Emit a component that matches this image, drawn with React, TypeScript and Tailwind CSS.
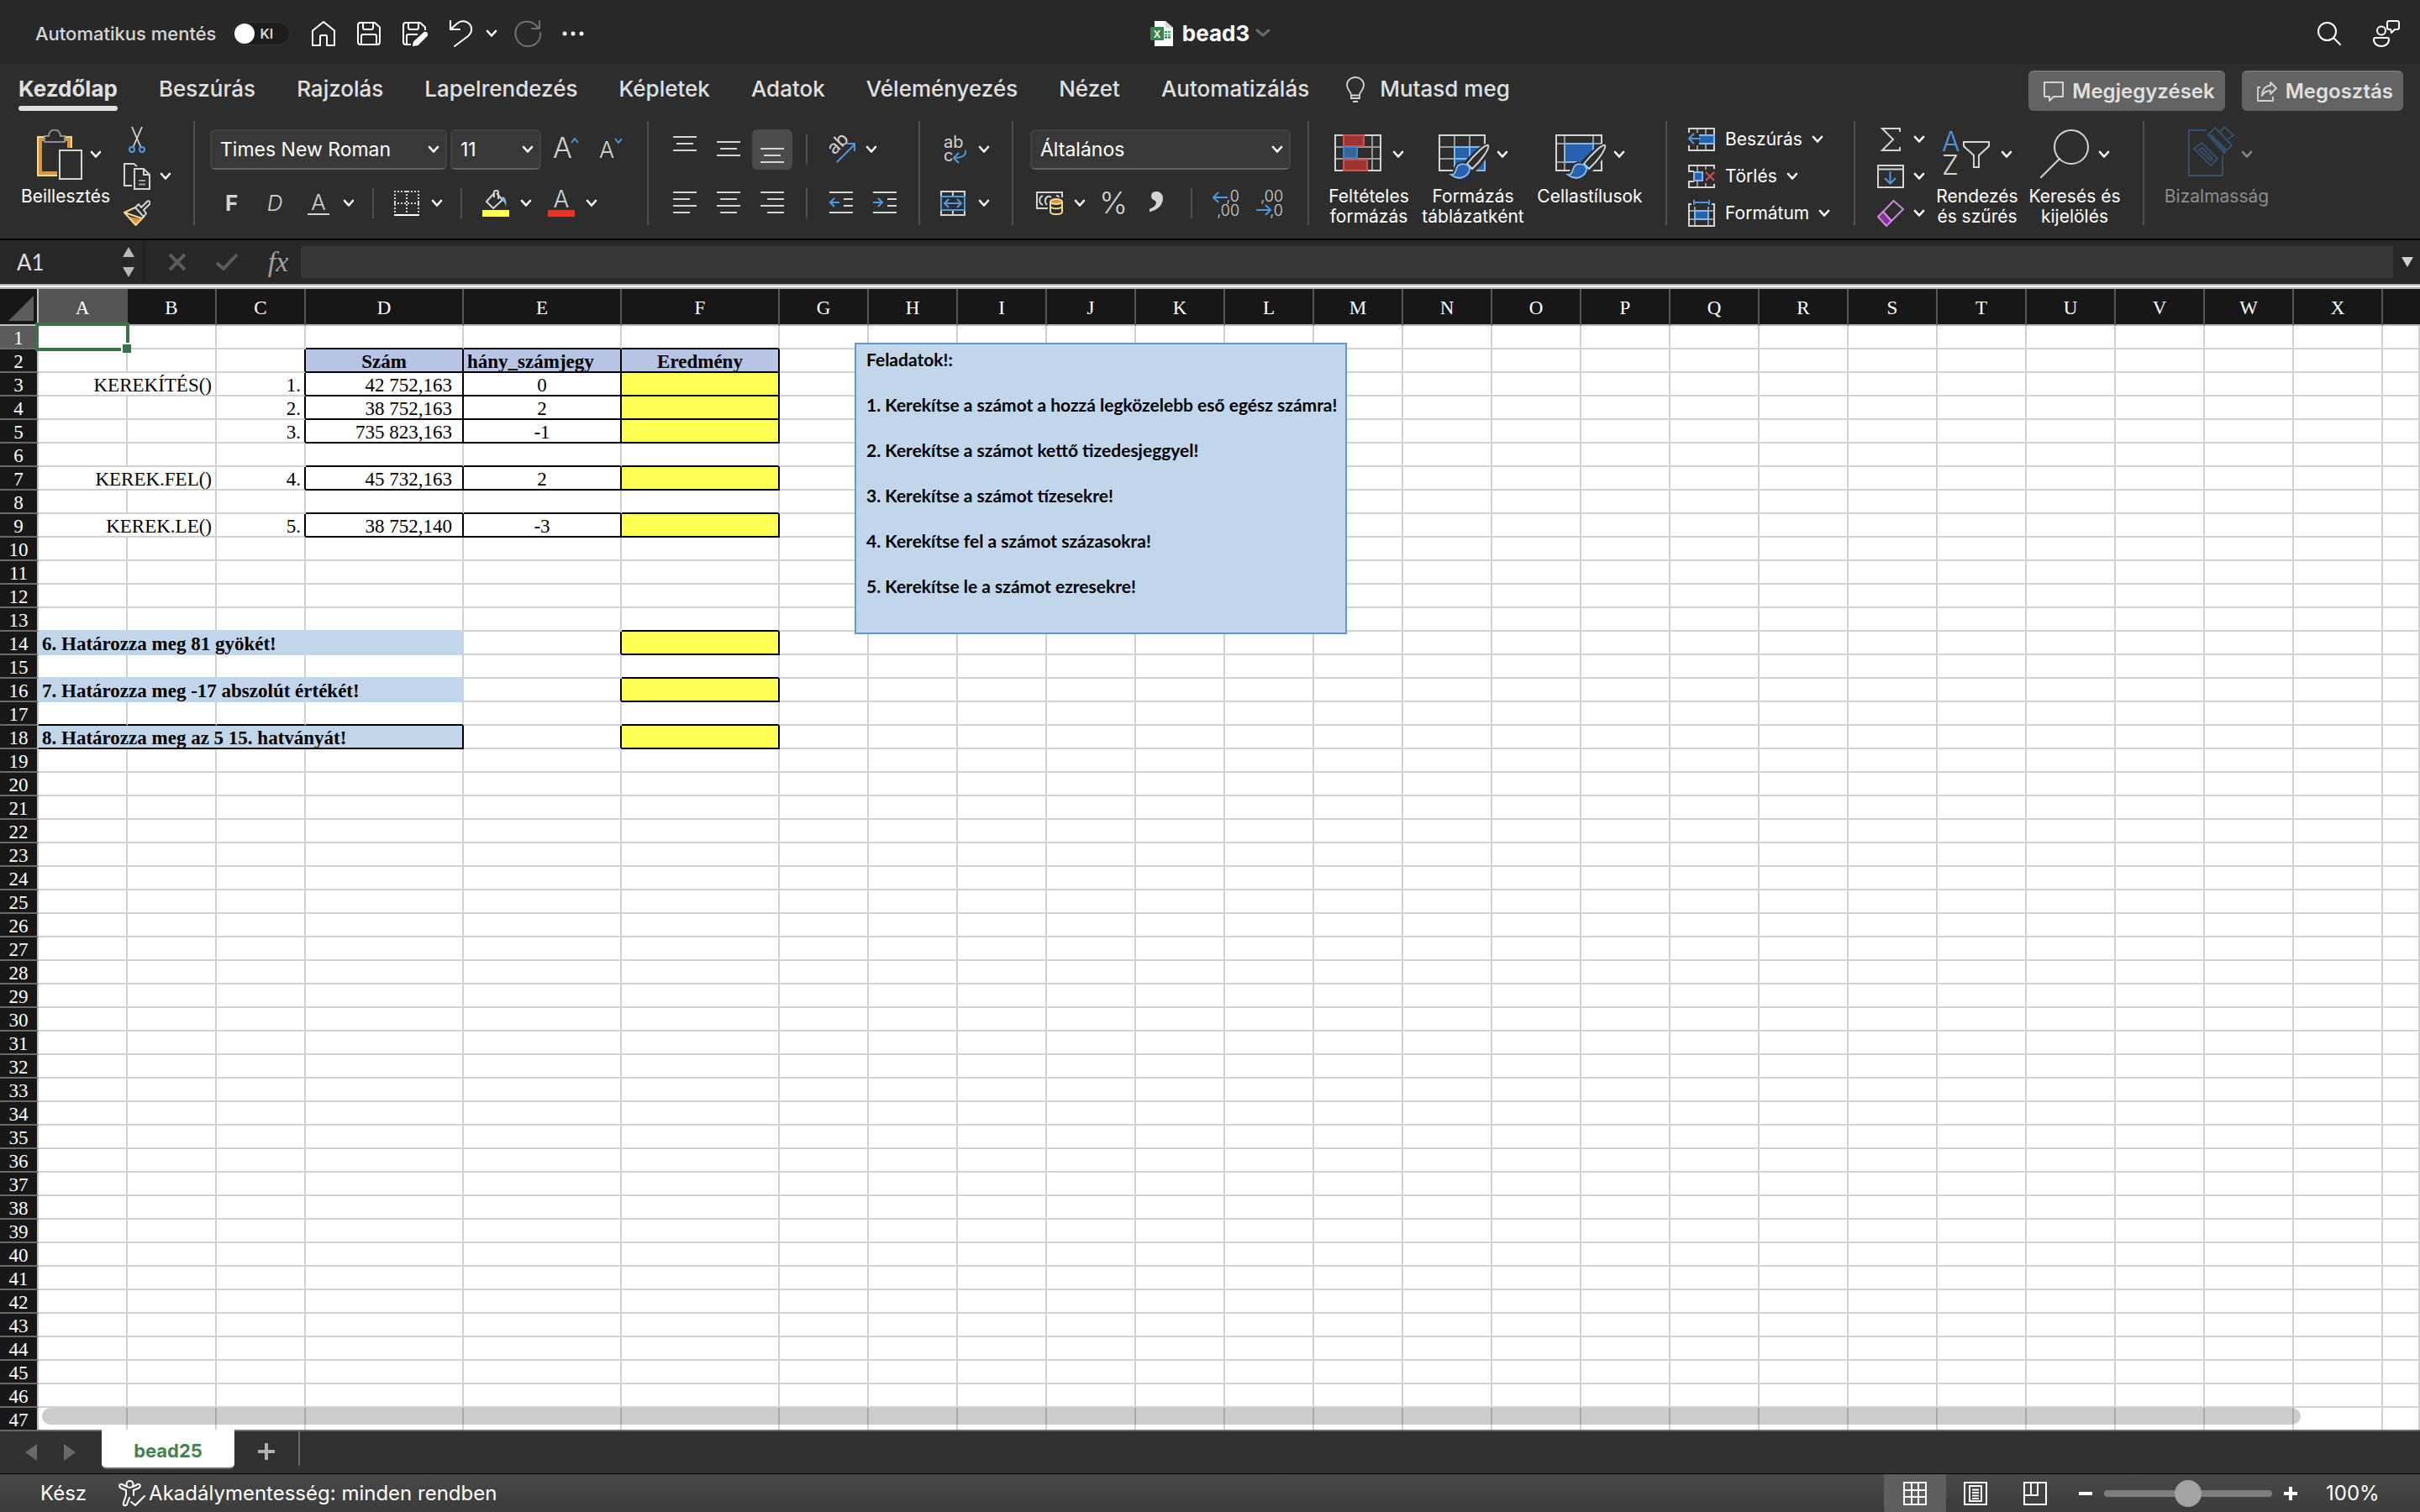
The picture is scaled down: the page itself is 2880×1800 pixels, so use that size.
import React, { useState } from 'react';
import clsx from 'clsx';

type IconProps = { className?: string };

const LIGHT = '#d4d4d4';
const BLUE = '#4f98df';
const SKY = '#84b9ee';
const NAVY = '#2862ae';

/* ---------- Icons ---------- */

const Chevron = ({ className = '' }: IconProps) => (
  <svg viewBox="0 0 12 8" className={clsx('h-2 w-3 shrink-0 overflow-visible', className)} fill="none" stroke="currentColor" strokeWidth="2.6" strokeLinecap="round" strokeLinejoin="round">
    <path d="M1 1L6 6.5L11 1" />
  </svg>
);

const HomeIcon = () => (
  <svg viewBox="0 0 28 30" className="h-[30px] w-7" fill="none" stroke="white" strokeWidth="2" strokeLinejoin="round">
    <path d="M1 11.5L14 1L27 11.5V29H18V18.5C18 17.5 17.500 17 16.500 17H11.500C10.500 17 10 17.500 10 18.500V29H1Z" />
  </svg>
);

const SaveIcon = () => (
  <svg viewBox="0 0 28 28" className="size-7" fill="none" stroke="white" strokeWidth="2" strokeLinejoin="round">
    <path d="M4 1H21L27 6.500V24C27 26 26 27 24 27H4C2 27 1 26 1 24V4C1 2 2 1 4 1Z" />
    <path d="M7 1V7C7 8.500 8 9 9 9H17C18.500 9 19 8 19 7V1M5 27V17C5 15.500 6 15 7 15H21C22.500 15 23 16 23 17V27" />
  </svg>
);

const SaveEditIcon = () => (
  <svg viewBox="0 0 30 30" className="size-[30px]" fill="none" stroke="white" strokeWidth="2" strokeLinejoin="round">
    <path d="M10 28H4C2 28 1 27 1 25V5C1 3 2 2 4 2H21L27 7.500V11M7 2V8C7 9.500 8 10 9 10H17C18.500 10 19 9 19 8V2M5 28V18C5 16.500 6 16 7 16H18" />
    <path d="M26 14C28 13 30 15 29 17L18 28L13 29L14 25Z" fill="white" />
  </svg>
);

const UndoIcon = () => (
  <svg viewBox="0 0 28 32" className="h-8 w-7" fill="none" stroke="white" strokeWidth="2" strokeLinecap="round" strokeLinejoin="round">
    <path d="M1 1V11H12M1 11L9 4C16 -2 27 3 26 12C26 15 24 17 22 19L6 31" />
  </svg>
);

const RedoIcon = () => (
  <svg viewBox="0 0 34 34" className="size-[34px]" fill="none" stroke="#707070" strokeWidth="2" strokeLinecap="round" strokeLinejoin="round">
    <path d="M31 2V11H22M30 11C24 1 11 0 5 8C-1 17 4 30 15 32C26 33 33 25 32 16" />
  </svg>
);

const DotsIcon = () => (
  <svg viewBox="0 0 26 6" className="h-1.5 w-[26px]" fill="white">
    <circle cx="3" cy="3" r="2.500" />
    <circle cx="13" cy="3" r="2.500" />
    <circle cx="23" cy="3" r="2.500" />
  </svg>
);

const ExcelIcon = () => (
  <svg viewBox="0 0 28 30" className="h-[30px] w-7">
    <path d="M5 0H18L27 8V30H5Z" fill="white" />
    <path d="M18 0V8H27Z" fill="#d8d8d8" />
    <path d="M17 12H20V14H17ZM21 12H24V14H21ZM17 15.500H20V17.500H17ZM21 15.500H24V17.500H21Z" fill="#3d9b62" />
    <path d="M17 18.500H20V20.500H17ZM21 18.500H24V20.500H21Z" fill="#1e5a37" />
    <rect x="0" y="7" width="16" height="16" rx="1" fill="#3a8150" />
    <text x="8" y="19.500" textAnchor="middle" fontFamily="Inter, sans-serif" fontWeight="600" fontSize="12" fill="white">X</text>
  </svg>
);

const SearchIcon = () => (
  <svg viewBox="0 0 28 28" className="size-7" fill="none" stroke="white" strokeWidth="2" strokeLinecap="round">
    <circle cx="11.500" cy="11.500" r="10.500" />
    <path d="M19 19L27 27" />
  </svg>
);

const PresenceIcon = () => (
  <svg viewBox="0 0 32 32" className="size-8" fill="none" stroke="white" strokeWidth="2" strokeLinejoin="round">
    <circle cx="10" cy="12.500" r="5" />
    <path d="M3 21H17C18.500 21 19 22 19 23C19 28 15 31 10 31C5 31 1 28 1 23C1 22 1.500 21 3 21Z" />
    <path d="M19 1H29C30.500 1 31 2 31 3V9C31 10.500 30 11 29 11H26L22 15L21 11H19C17.500 11 17 10 17 9V3C17 2 17.500 1 19 1Z" />
  </svg>
);

const BulbIcon = () => (
  <svg viewBox="0 0 22 31" className="h-[31px] w-[22px]" fill="none" stroke={LIGHT} strokeWidth="1.800">
    <path d="M6 22C6 18 1 16 1 10.500C1 5 5.500 1 11 1C16.500 1 21 5 21 10.500C21 16 16 18 16 22V26H6ZM6 22.500H16M8 30H14" />
  </svg>
);

const CommentIcon = () => (
  <svg viewBox="0 0 24 24" className="size-6" fill="none" stroke={LIGHT} strokeWidth="2" strokeLinejoin="round">
    <path d="M1 1H23V18H12L7 23V18H1Z" />
  </svg>
);

const ShareIcon = () => (
  <svg viewBox="0 0 24 24" className="size-6" fill="none" stroke={LIGHT} strokeWidth="1.800" strokeLinejoin="round">
    <path d="M4 7H1V23H19V18" />
    <path d="M16 1L23 8L16 15V11C11 11 8 13 6 17C6 10 10 5 16 5Z" />
  </svg>
);

const PasteIcon = () => (
  <svg viewBox="0 0 54 60" className="h-[60px] w-[54px]" fill="none" strokeWidth="2">
    <path d="M41 22V9H1V55H24" stroke="#f6d98e" />
    <path d="M38 22V12H4V52H24" stroke="#d8963c" strokeWidth="4" />
    <path d="M9 15V8H14C14 -2 28 -2 28 8H33V15Z" stroke="#8f8f8f" fill="#2d2d2d" />
    <path d="M27 25H53V59H27Z" stroke={LIGHT} fill="#2d2d2d" />
  </svg>
);

const CutIcon = () => (
  <svg viewBox="0 0 32 32" className="size-8" fill="none" strokeWidth="1.800">
    <path d="M10 1L20.500 25M22 1L11.500 25" stroke={LIGHT} />
    <g stroke={BLUE} strokeWidth="2">
      <circle cx="10" cy="28" r="3" />
      <circle cx="22" cy="28" r="3" />
    </g>
  </svg>
);

const CopyIcon = () => (
  <svg viewBox="0 0 32 32" className="size-8" fill="none" stroke={LIGHT} strokeWidth="2">
    <path d="M10 27H1V1H12L16 4M13 7H24L31 14V31H13ZM24 7V14H31" />
    <path d="M18 21H26M18 25.500H26" stroke="#a0a0a0" />
  </svg>
);

const PainterIcon = () => (
  <svg viewBox="0 0 32 32" className="size-8" fill="none" strokeWidth="2" strokeLinejoin="round">
    <path d="M7 20L22 23L14 30Z" fill="#d8963c" />
    <path d="M14 9L1 15L14.500 30L25 19M1 15L22 22" stroke="#f6d98e" />
    <path d="M14 9L18 5L21 9L28 2C30 0 33 3 31 5L24 12L27 16L24 20Z" stroke={LIGHT} />
  </svg>
);

const GrowFontIcon = () => (
  <svg viewBox="0 0 32 32" className="size-8 overflow-visible" fill="none">
    <text x="0" y="26" fontFamily="Inter, sans-serif" fontWeight="300" fontSize="34" fill={LIGHT}>A</text>
    <path d="M22 8L26 3L30 8" stroke={BLUE} strokeWidth="2" />
  </svg>
);

const ShrinkFontIcon = () => (
  <svg viewBox="0 0 32 32" className="size-8 overflow-visible" fill="none">
    <text x="1" y="26" fontFamily="Inter, sans-serif" fontWeight="300" fontSize="27" fill={LIGHT}>A</text>
    <path d="M20 3L24 8L28 3" stroke={BLUE} strokeWidth="2" />
  </svg>
);

const BordersIcon = () => (
  <svg viewBox="0 0 30 30" className="size-[30px]" fill="none" stroke={LIGHT} strokeWidth="2">
    <path d="M0 1H30M0 15H30M1 0V26M15 0V26M29 0V26" strokeDasharray="2 2" />
    <path d="M0 29H30" stroke="white" />
  </svg>
);

const FillColorIcon = () => (
  <svg viewBox="0 0 32 32" className="size-8" fill="none">
    <path d="M14 4L5 14L13 22L24 12L17 4M14 9V3C14 0 19 0 19 3V11" stroke={LIGHT} strokeWidth="2" strokeLinejoin="round" />
    <path d="M24 8C28 9 29 14 28 20C27 16 26 14 23 12Z" fill={SKY} />
    <path d="M0 24H32V32H0Z" fill="#ffff54" />
  </svg>
);

const FontColorIcon = () => (
  <svg viewBox="0 0 32 32" className="size-8 overflow-visible" fill="none">
    <text x="16" y="21" textAnchor="middle" fontFamily="Inter, sans-serif" fontWeight="300" fontSize="28" fill={LIGHT}>A</text>
    <path d="M0 24H32V32H0Z" fill="#ea3323" />
  </svg>
);

const linePaths = {
  top: 'M0 1H28M4 9H24M0 17H28',
  middle: 'M0 7H28M4 15H24M0 23H28',
  bottom: 'M0 15H28M4 23H24M0 31H28',
  left: 'M0 3H28M0 11H20M0 19H28M0 27H20',
  center: 'M0 3H28M4 11H24M0 19H28M4 27H24',
  right: 'M0 3H28M8 11H28M0 19H28M8 27H28',
};

const LinesIcon = ({ kind }: { kind: keyof typeof linePaths }) => (
  <svg viewBox="0 0 28 32" className="h-8 w-7" fill="none" stroke={LIGHT} strokeWidth="2">
    <path d={linePaths[kind]} />
  </svg>
);

const IndentIcon = ({ out = false }: { out?: boolean }) => (
  <svg viewBox="0 0 28 32" className="h-8 w-7" fill="none" stroke={LIGHT} strokeWidth="2">
    <path d="M0 3H28M17 11H28M17 19H28M0 27H28" />
    <path d={out ? 'M12 15H1M6 10L1 15L6 20' : 'M0 15H11M6 10L11 15L6 20'} stroke={BLUE} />
  </svg>
);

const OrientationIcon = () => (
  <svg viewBox="0 0 34 34" className="size-[34px] overflow-visible" fill="none">
    <text x="8" y="24" transform="rotate(-45 8 24)" fontFamily="Inter, sans-serif" fontSize="22" fill={LIGHT}>ab</text>
    <path d="M11 32L32 11M23 10H32V19" stroke={BLUE} strokeWidth="2" />
  </svg>
);

const WrapIcon = () => (
  <svg viewBox="0 0 28 34" className="h-[34px] w-7 overflow-visible" fill="none">
    <text x="0" y="15" fontFamily="Inter, sans-serif" fontSize="20" fill={LIGHT}>ab</text>
    <text x="0" y="31" fontFamily="Inter, sans-serif" fontSize="20" fill={LIGHT}>c</text>
    <path d="M26 18C27 24 22 27 13 27M18 21L12 27L18 33" stroke={BLUE} strokeWidth="2" />
  </svg>
);

const MergeIcon = () => (
  <svg viewBox="0 0 30 30" className="size-[30px]" fill="none" strokeWidth="2">
    <path d="M1 6V1H29V6M1 24V29H29V24M15 1V6M15 24V29" stroke={LIGHT} />
    <path d="M1 7H29V23H1ZM5 15H25M10 10L5 15L10 20M20 10L25 15L20 20" stroke={BLUE} />
  </svg>
);

const CurrencyIcon = () => (
  <svg viewBox="0 0 32 28" className="h-7 w-8" fill="none" strokeWidth="2">
    <path d="M14 20H1V1H31V7" stroke={LIGHT} />
    <path d="M8 5C3 7 3 14 8 16M13 16C10 13 10 8 14 6C16 5 17 6 18 7M24 5C26 5 27 6 27 7" stroke={LIGHT} />
    <path d="M17 12V24C17 28 31 28 31 24V12" stroke="#f6d98e" />
    <ellipse cx="24" cy="12" rx="7" ry="3" stroke="#f6d98e" fill="#d8963c" />
    <path d="M17 18C19 21 29 21 31 18" stroke="#f6d98e" />
  </svg>
);

const PercentIcon = () => (
  <svg viewBox="0 0 32 32" className="size-8 overflow-visible">
    <text x="16" y="28" textAnchor="middle" fontFamily="Inter, sans-serif" fontWeight="300" fontSize="36" fill={LIGHT}>%</text>
  </svg>
);

const CommaIcon = () => (
  <svg viewBox="0 0 16 28" className="h-7 w-4 overflow-visible">
    <text x="8" y="12" textAnchor="middle" fontFamily="Liberation Serif, serif" fontWeight="700" fontSize="80" fill={LIGHT}>,</text>
  </svg>
);

const DecimalIcon = ({ less = false }: { less?: boolean }) => (
  <svg viewBox="0 0 32 32" className="size-8 overflow-visible" fill="none">
    <g fontFamily="Inter, sans-serif" fontWeight="300" fontSize="18" fill={LIGHT} textAnchor="end">
      <text x="32" y="14">{less ? ',00' : ',0'}</text>
      <text x="32" y="31">{less ? ',0' : ',00'}</text>
    </g>
    <path d={less ? 'M0 24H17M11 18L17 24L11 30' : 'M18 9H1M7 3L1 9L7 15'} stroke={BLUE} strokeWidth="2" />
  </svg>
);

const PaintTip = () => (
  <>
    <path d="M59 20C62 23 50 39 41 48L33 41C42 31 56 18 59 20Z" fill="#2d2d2d" stroke="#2d2d2d" strokeWidth="7" />
    <path d="M15 54C20 54 20 50 22 45C25 40 34 40 37 46C38 54 26 63 15 54Z" fill="#2d2d2d" stroke="#2d2d2d" strokeWidth="6" />
    <path d="M59 19C61 23 50 38 40 47L34 41C42 31 56 17 59 19Z" fill="#2d2d2d" stroke={LIGHT} strokeWidth="2" />
    <path d="M15 54C20 54 20 50 22 45C25 40 34 40 37 46C38 54 26 63 15 54Z" fill={NAVY} stroke={SKY} strokeWidth="2" />
  </>
);

const ConditionalIcon = () => (
  <svg viewBox="0 0 60 60" className="size-[60px]" fill="none" strokeWidth="2">
    <path d="M1 21H55M1 35H55M11 7V49M45 7V49" stroke="#9a9a9a" />
    <path d="M1 7H55V49H1Z" stroke={LIGHT} />
    <path d="M11 7H35V20H11ZM11 36H39V49H11Z" fill="#9c3530" stroke="#d2514c" />
    <path d="M11 21H27V34H11Z" fill="#35659c" stroke="#3f86c6" />
  </svg>
);

const FormatTableIcon = () => (
  <svg viewBox="0 0 60 60" className="size-[60px] overflow-visible" fill="none" strokeWidth="2">
    <path d="M1 21H55M1 35H55M19 7V49M37 7V49" stroke="#9a9a9a" />
    <path d="M1 7H55V49H1Z" stroke={LIGHT} />
    <path d="M19 21H55V49H19Z" fill={NAVY} stroke={SKY} />
    <path d="M19 35H55M37 21V49" stroke={SKY} />
    <PaintTip />
  </svg>
);

const CellStylesIcon = () => (
  <svg viewBox="0 0 60 60" className="size-[60px] overflow-visible" fill="none" strokeWidth="2">
    <path d="M1 17H55M1 39H55M11 7V49M45 7V49" stroke="#9a9a9a" />
    <path d="M1 7H55V49H1Z" stroke={LIGHT} />
    <path d="M11 17H45V39H11Z" fill={NAVY} stroke={SKY} />
    <PaintTip />
  </svg>
);

const InsertCellsIcon = () => (
  <svg viewBox="0 0 32 32" className="size-8" fill="none" strokeWidth="2">
    <path d="M11 3V29M21 3V29M1 11H31M1 21H31" stroke="#9a9a9a" />
    <path d="M1 9V3H31V29H1V21" stroke={LIGHT} />
    <path d="M12 11H31V21H12Z" fill={NAVY} stroke={SKY} />
    <path d="M0 8H13V23H0Z" fill="#2d2d2d" />
    <path d="M15 15H1M7 9L1 15L7 21" stroke={BLUE} />
  </svg>
);

const DeleteCellsIcon = () => (
  <svg viewBox="0 0 32 32" className="size-8" fill="none" strokeWidth="2">
    <path d="M11 3V10M21 3V8M11 22V29M21 24V29" stroke="#9a9a9a" />
    <path d="M7 10H1V3H31V7M7 22H1V29H31V25" stroke={LIGHT} />
    <path d="M7 11H17V21H7Z" fill={NAVY} stroke={SKY} />
    <path d="M21 11L31 21M31 11L21 21" stroke="#d2514c" />
  </svg>
);

const FormatCellsIcon = () => (
  <svg viewBox="0 0 32 32" className="size-8" fill="none" strokeWidth="2">
    <path d="M8 8V31M24 8V31M1 13H31M1 23H31" stroke="#9a9a9a" />
    <path d="M4 5H1V31H31V5H28" stroke={LIGHT} />
    <path d="M8 13H24V23H8Z" fill={NAVY} stroke={SKY} />
    <path d="M7 3H25M7 0V6M25 0V6" stroke={BLUE} />
  </svg>
);

const SumIcon = () => (
  <svg viewBox="0 0 32 32" className="size-8" fill="none" stroke={LIGHT} strokeWidth="2">
    <path d="M27 7V3H6L19 16L6 29H27V25" />
  </svg>
);

const FillDownIcon = () => (
  <svg viewBox="0 0 32 32" className="size-8" fill="none" stroke={LIGHT} strokeWidth="2">
    <path d="M1 3H31V29H1ZM1 7.500H31" />
    <path d="M15.500 10V24M9 18L15.500 24.500L22 18" stroke={BLUE} />
  </svg>
);

const EraserIcon = () => (
  <svg viewBox="0 0 32 32" className="size-8" fill="none" stroke="#c98bd6" strokeWidth="2" strokeLinejoin="round">
    <path d="M7 14L17 25L11 31L1 20Z" fill="#8a2f9e" />
    <path d="M19.500 1L31 11L17 25L7 14Z" />
  </svg>
);

const SortFilterIcon = () => (
  <svg viewBox="0 0 60 60" className="size-[60px] overflow-visible" fill="none">
    <text x="-1" y="26" fontFamily="Inter, sans-serif" fontWeight="300" fontSize="32" fill={BLUE}>A</text>
    <text x="-1" y="54" fontFamily="Inter, sans-serif" fontWeight="300" fontSize="32" fill={LIGHT}>Z</text>
    <path d="M25 15H55V20L43 31V45H37V31L25 20Z" stroke={LIGHT} strokeWidth="2" />
  </svg>
);

const FindIcon = () => (
  <svg viewBox="0 0 60 60" className="size-[60px]" fill="none" stroke={LIGHT} strokeWidth="2" strokeLinecap="round">
    <circle cx="37" cy="21" r="20" />
    <path d="M23 35L1 57" />
  </svg>
);

const SensitivityIcon = () => (
  <svg viewBox="0 0 54 60" className="h-[60px] w-[54px] overflow-visible" fill="none" stroke="#34506c" strokeWidth="2">
    <path d="M22 1H1V55H41V31M7 23L16 16L35 35L27 43ZM13 24L17 22L29 35L27 37Z" />
    <path d="M24 6L32 -2L52 19L44 27Z" />
    <path d="M24 7L28 7L46 25L43 28Z" fill="#34506c" />
    <path d="M38 3L43 -3L54 7L47 12" />
  </svg>
);

const AccessibilityIcon = () => (
  <svg viewBox="0 0 32 32" className="size-8" fill="none" stroke="white" strokeWidth="2" strokeLinecap="round" strokeLinejoin="round">
    <circle cx="13.500" cy="5" r="4" />
    <path d="M10 8L4 5C1 4 0 8 3 9.500L9 12V18L6 27C5 31 9 31 10 29L13 21M17 8L23 5C26 4 27 8 24 9.500L18 12V18M15 26L20 30L31 19" />
  </svg>
);

const NormalViewIcon = () => (
  <svg viewBox="0 0 28 28" className="size-7" fill="none" stroke="white" strokeWidth="2">
    <path d="M1 1H27V27H1ZM10 1V27M18 1V27M1 10H27M1 18H27" />
  </svg>
);

const PageLayoutIcon = () => (
  <svg viewBox="0 0 28 28" className="size-7" fill="none" stroke="white" strokeWidth="2">
    <path d="M1 1H27V27H1ZM7 5H21V23H7ZM10 9.500H18M10 13H18M10 16.500H18M10 20H18" />
  </svg>
);

const PageBreakIcon = () => (
  <svg viewBox="0 0 28 28" className="size-7" fill="none" stroke="white" strokeWidth="2">
    <path d="M1 1H27V27H1ZM9 1V16M17 1V16H1" />
  </svg>
);

/* ---------- Ribbon pieces ---------- */

const IconButton = ({ label, className = '', children }: { label: string; className?: string; children: React.ReactNode }) => (
  <button type="button" aria-label={label} className={clsx('flex shrink-0 items-center', className)}>
    {children}
  </button>
);

const Separator = () => <div className="h-[124px] w-0.5 shrink-0 bg-[#505050]" />;
const SmallSeparator = ({ className = '' }: IconProps) => <div className={clsx('h-9 w-0.5 shrink-0 bg-[#505050]', className)} />;

const SelectBox = ({ label, value, className = '' }: { label: string; value: string; className?: string }) => (
  <div className={clsx('relative flex h-12 shrink-0 items-center rounded-md border-2 border-[#424242] border-b-[#606060] bg-[#383838]', className)}>
    <select aria-label={label} defaultValue={value} className="h-full w-full appearance-none bg-transparent px-2.5 text-[23px] text-white outline-none">
      <option>{value}</option>
    </select>
    <Chevron className="pointer-events-none absolute right-2" />
  </div>
);

const BigButton = ({ lines, icon, className = '', iconClass = '' }: { lines: string[]; icon: React.ReactNode; className?: string; iconClass?: string }) => (
  <button type="button" className={clsx('flex shrink-0 flex-col items-center gap-2 pt-2.5 text-[21px] leading-6 whitespace-nowrap', className)}>
    <span className={clsx('flex items-center gap-2.5', iconClass)}>
      {icon}
      <Chevron />
    </span>
    <span>
      {lines.map((line) => (
        <span key={line} className="block">{line}</span>
      ))}
    </span>
  </button>
);

const TitleBar = () => {
  const [autoSave, setAutoSave] = useState(false);

  return (
    <header className="grid h-[76px] shrink-0 grid-cols-[1fr_auto_1fr] items-center bg-[#282828] pt-1">
      <div className="flex items-center pl-[42px]">
        <label className="flex items-center text-[22px] font-medium text-[#d6d6d6]">
          Automatikus mentés
          <input type="checkbox" role="switch" className="sr-only" checked={autoSave} onChange={(e) => setAutoSave(e.target.checked)} />
          <span className={clsx('ml-5 flex h-7 w-[68px] items-center gap-1.5 rounded-full border border-[#333333] px-px text-base font-semibold', autoSave ? 'flex-row-reverse bg-green-700' : 'bg-[#1c1c1c]')}>
            <span className="size-6 rounded-full bg-white" />
            {autoSave ? 'BE' : 'KI'}
          </span>
        </label>
        <div className="ml-[26px] flex items-center gap-[26px]">
          <IconButton label="Kezdőlap megnyitása"><HomeIcon /></IconButton>
          <IconButton label="Mentés"><SaveIcon /></IconButton>
          <IconButton label="Mentés másként"><SaveEditIcon /></IconButton>
          <IconButton label="Visszavonás" className="gap-4"><UndoIcon /><Chevron /></IconButton>
        </div>
        <IconButton label="Ismétlés" className="ml-5"><RedoIcon /></IconButton>
        <IconButton label="Továbbiak" className="ml-6"><DotsIcon /></IconButton>
      </div>
      <button type="button" className="flex items-center text-[26px] leading-8 font-bold">
        <ExcelIcon />
        <span className="ml-2.5">bead3</span>
        <svg viewBox="0 0 16 8" className="ml-2 h-2 w-4 overflow-visible" fill="none" stroke="#6b6b6b" strokeWidth="3" strokeLinecap="round" strokeLinejoin="round">
          <path d="M1 0L8 6L15 0" />
        </svg>
      </button>
      <div className="flex items-center justify-end gap-[38px] pr-6">
        <IconButton label="Keresés"><SearchIcon /></IconButton>
        <IconButton label="Jelenlét"><PresenceIcon /></IconButton>
      </div>
    </header>
  );
};

const tabs = ['Kezdőlap', 'Beszúrás', 'Rajzolás', 'Lapelrendezés', 'Képletek', 'Adatok', 'Véleményezés', 'Nézet', 'Automatizálás'];

const TabBar = () => (
  <nav className="flex h-16 shrink-0 items-start bg-[#2d2d2d] pr-5 pl-[22px] text-[26px] leading-8 text-[#e0e0e0]">
    <div className="flex gap-[49px] pt-3.5">
      {tabs.map((tab, i) => (
        <a key={tab} href="#" className={i === 0 ? 'font-bold' : 'font-medium'}>
          {tab}
          {i === 0 && <span className="mt-1 block h-1.5 rounded-full bg-[#e0e0e0]" />}
        </a>
      ))}
    </div>
    <a href="#" className="ml-11 flex items-center gap-[18px] pt-3.5 font-medium">
      <BulbIcon />
      Mutasd meg
    </a>
    <div className="mt-2 ml-auto flex gap-5 text-2xl font-semibold">
      <button type="button" className="flex h-12 items-center gap-2.5 rounded-md border-t-2 border-[#757575] bg-[#636363] pr-3 pl-[18px]">
        <CommentIcon />
        Megjegyzések
      </button>
      <button type="button" className="flex h-12 items-center gap-2.5 rounded-md border-t-2 border-[#757575] bg-[#636363] pr-3 pl-[18px]">
        <ShareIcon />
        Megosztás
      </button>
    </div>
  </nav>
);

const Ribbon = () => (
  <div className="flex h-[146px] shrink-0 overflow-hidden border-b-2 border-black bg-[#2d2d2d] pt-1 text-white">
    {/* Clipboard */}
    <div className="flex w-[230px] shrink-0 items-start pl-6">
      <BigButton className="w-[108px]" iconClass="pl-2" lines={['Beillesztés']} icon={<PasteIcon />} />
      <div className="ml-[15px] flex flex-col gap-3 pt-1.5">
        <IconButton label="Kivágás"><CutIcon /></IconButton>
        <IconButton label="Másolás" className="gap-3"><CopyIcon /><Chevron /></IconButton>
        <IconButton label="Formátummásoló"><PainterIcon /></IconButton>
      </div>
    </div>
    <Separator />

    {/* Font */}
    <div className="flex w-[538px] shrink-0 flex-col gap-4 pt-2.5 pl-[18px]">
      <div className="flex h-12 items-center">
        <SelectBox label="Betűtípus" value="Times New Roman" className="w-[282px]" />
        <SelectBox label="Betűméret" value="11" className="ml-1 w-[108px]" />
        <IconButton label="Betűméret növelése" className="ml-3.5"><GrowFontIcon /></IconButton>
        <IconButton label="Betűméret csökkentése" className="ml-[22px]"><ShrinkFontIcon /></IconButton>
      </div>
      <div className="flex h-12 items-center pl-[18px] text-[26px] leading-8 text-[#d4d4d4]">
        <button type="button" aria-label="Félkövér" className="w-3.5 font-bold">F</button>
        <button type="button" aria-label="Dőlt" className="ml-[34px] w-[22px] font-light italic">D</button>
        <IconButton label="Aláhúzott" className="ml-7 gap-[17px] text-white">
          <span className="flex w-[26px] flex-col items-center border-b-2 border-[#d4d4d4] leading-[26px] font-light text-[#d4d4d4]">A</span>
          <Chevron />
        </IconButton>
        <SmallSeparator className="ml-[22px]" />
        <IconButton label="Szegélyek" className="ml-6 gap-[15px] text-white"><BordersIcon /><Chevron /></IconButton>
        <SmallSeparator className="ml-[22px]" />
        <IconButton label="Kitöltőszín" className="ml-6 gap-3.5 text-white"><FillColorIcon /><Chevron /></IconButton>
        <IconButton label="Betűszín" className="ml-5 gap-3.5 text-white"><FontColorIcon /><Chevron /></IconButton>
      </div>
    </div>
    <Separator />

    {/* Alignment */}
    <div className="flex w-[321px] shrink-0 flex-col gap-4 pt-2.5 pl-[29px]">
      <div className="flex h-12 items-center">
        <IconButton label="Felülre igazítás"><LinesIcon kind="top" /></IconButton>
        <IconButton label="Középre igazítás függőlegesen" className="ml-6"><LinesIcon kind="middle" /></IconButton>
        <IconButton label="Alulra igazítás" className="ml-3.5 h-12 w-12 justify-center rounded-md bg-[#4b4b4b]"><LinesIcon kind="bottom" /></IconButton>
        <SmallSeparator className="ml-4" />
        <IconButton label="Tájolás" className="ml-6 gap-3"><OrientationIcon /><Chevron /></IconButton>
      </div>
      <div className="flex h-12 items-center gap-6">
        <IconButton label="Balra igazítás"><LinesIcon kind="left" /></IconButton>
        <IconButton label="Középre igazítás"><LinesIcon kind="center" /></IconButton>
        <IconButton label="Jobbra igazítás"><LinesIcon kind="right" /></IconButton>
        <SmallSeparator className="mx-0.5" />
        <IconButton label="Behúzás csökkentése"><IndentIcon out /></IconButton>
        <IconButton label="Behúzás növelése"><IndentIcon /></IconButton>
      </div>
    </div>
    <Separator />

    {/* Wrap and merge */}
    <div className="flex w-[109px] shrink-0 flex-col gap-4 pt-2.5 pl-6">
      <IconButton label="Sortörés" className="h-12 gap-3.5 pl-1"><WrapIcon /><Chevron /></IconButton>
      <IconButton label="Cellaegyesítés" className="h-12 gap-4"><MergeIcon /><Chevron /></IconButton>
    </div>
    <Separator />

    {/* Number */}
    <div className="flex w-[350px] shrink-0 flex-col gap-4 px-5 pt-2.5">
      <SelectBox label="Számformátum" value="Általános" className="w-full" />
      <div className="flex h-12 items-center pl-[7px]">
        <IconButton label="Könyvelési számformátum" className="gap-3.5"><CurrencyIcon /><Chevron /></IconButton>
        <IconButton label="Százalék" className="ml-[18px]"><PercentIcon /></IconButton>
        <IconButton label="Ezres csoport" className="ml-7"><CommaIcon /></IconButton>
        <SmallSeparator className="ml-8" />
        <IconButton label="Tizedesjegyek növelése" className="ml-6"><DecimalIcon /></IconButton>
        <IconButton label="Tizedesjegyek csökkentése" className="ml-5"><DecimalIcon less /></IconButton>
      </div>
    </div>
    <Separator />

    {/* Styles */}
    <div className="flex w-[424px] shrink-0 items-start gap-3.5 pl-[22px]">
      <BigButton className="w-[98px]" lines={['Feltételes', 'formázás']} icon={<ConditionalIcon />} />
      <BigButton className="w-[122px]" lines={['Formázás', 'táblázatként']} icon={<FormatTableIcon />} />
      <BigButton className="w-[128px]" lines={['Cellastílusok']} icon={<CellStylesIcon />} />
    </div>
    <Separator />

    {/* Cells */}
    <div className="flex w-[222px] shrink-0 flex-col items-start gap-3 pt-1.5 pl-[25px] text-[21px] leading-8">
      <button type="button" className="flex items-center"><InsertCellsIcon /><span className="mx-3">Beszúrás</span><Chevron /></button>
      <button type="button" className="flex items-center"><DeleteCellsIcon /><span className="mx-3">Törlés</span><Chevron /></button>
      <button type="button" className="flex items-center"><FormatCellsIcon /><span className="mx-3">Formátum</span><Chevron /></button>
    </div>
    <Separator />

    {/* Editing */}
    <div className="flex w-[342px] shrink-0 items-start gap-3.5 pl-[26px]">
      <div className="flex flex-col gap-3 pt-1.5">
        <IconButton label="AutoSzum" className="gap-3"><SumIcon /><Chevron /></IconButton>
        <IconButton label="Kitöltés" className="gap-3"><FillDownIcon /><Chevron /></IconButton>
        <IconButton label="Törlés" className="gap-3"><EraserIcon /><Chevron /></IconButton>
      </div>
      <BigButton className="w-[98px]" lines={['Rendezés', 'és szűrés']} icon={<SortFilterIcon />} />
      <BigButton className="w-[106px]" lines={['Keresés és', 'kijelölés']} icon={<FindIcon />} />
    </div>
    <Separator />

    <div className="flex items-start pl-6">
      <BigButton className="w-[124px] text-[#8c8c8c]" iconClass="pl-2" lines={['Bizalmasság']} icon={<SensitivityIcon />} />
    </div>
  </div>
);

const FormulaBar = () => (
  <>
    <div className="flex h-[52px] shrink-0 items-center bg-[#272727]">
      <div className="flex h-full w-[172px] shrink-0 items-center justify-between border-r-2 border-[#1f1f1f] pr-2.5 pl-5">
        <input aria-label="Név mező" defaultValue="A1" className="w-24 bg-transparent font-[Lato] text-[26px] text-[#e0e0e0] outline-none" />
        <svg viewBox="0 0 14 36" className="h-9 w-3.5" fill="#b8b8b8">
          <path d="M7 0L14 12H0ZM7 36L14 24H0Z" />
        </svg>
      </div>
      <div className="flex shrink-0 items-center pl-7">
        <IconButton label="Mégse">
          <svg viewBox="0 0 22 22" className="size-[22px]" fill="none" stroke="#5c5c5c" strokeWidth="4">
            <path d="M2 2L20 20M20 2L2 20" />
          </svg>
        </IconButton>
        <IconButton label="Beírás" className="ml-[34px]">
          <svg viewBox="0 0 28 22" className="h-[22px] w-7" fill="none" stroke="#5c5c5c" strokeWidth="4">
            <path d="M2 12L10 19L26 2" />
          </svg>
        </IconButton>
        <button type="button" aria-label="Függvény beszúrása" className="ml-8 w-[30px] font-['Liberation_Serif'] text-[34px] leading-10 text-[#a0a0a0] italic">fx</button>
      </div>
      <input aria-label="Szerkesztőléc" className="ml-3 h-[38px] min-w-0 flex-1 bg-[#373737] px-2 text-white outline-none" />
      <button type="button" aria-label="Szerkesztőléc kibontása" className="w-8 shrink-0 pl-2.5">
        <svg viewBox="0 0 14 12" className="h-3 w-3.5" fill="#d0d0d0">
          <path d="M0 0H14L7 12Z" />
        </svg>
      </button>
    </div>
    <div className="h-1.5 shrink-0 border-y-2 border-[#b4b4b4] bg-white" />
  </>
);

/* ---------- Sheet ---------- */

interface Cell {
  col: number;
  span?: number;
  text?: string;
  className?: string;
}

const columns = 'ABCDEFGHIJKLMNOPQRSTUVWX'.split('');
const rowCount = 47;

const yellow = (col = 5): Cell => ({ col, className: 'bg-[#ffff54]' });
const num = (text: string): Cell => ({ col: 3, text, className: 'text-right pr-3' });
const digits = (text: string): Cell => ({ col: 4, text, className: 'text-center' });
const fn = (text: string): Cell => ({ col: 0, span: 2, text, className: 'text-right pr-1' });
const order = (text: string): Cell => ({ col: 2, text, className: 'text-right pr-1' });
const task = (text: string): Cell => ({ col: 0, span: 4, text, className: 'bg-[#c2d6eb] pl-1 font-bold' });

const cells: Record<number, Cell[]> = {
  2: [
    { col: 3, text: 'Szám', className: 'bg-[#b7c4e4] text-center font-bold' },
    { col: 4, text: 'hány_számjegy', className: 'bg-[#b7c4e4] pl-1 font-bold' },
    { col: 5, text: 'Eredmény', className: 'bg-[#b7c4e4] text-center font-bold' },
  ],
  3: [fn('KEREKÍTÉS()'), order('1.'), num('42 752,163'), digits('0'), yellow()],
  4: [order('2.'), num('38 752,163'), digits('2'), yellow()],
  5: [order('3.'), num('735 823,163'), digits('-1'), yellow()],
  7: [fn('KEREK.FEL()'), order('4.'), num('45 732,163'), digits('2'), yellow()],
  9: [fn('KEREK.LE()'), order('5.'), num('38 752,140'), digits('-3'), yellow()],
  14: [task('6. Határozza meg 81 gyökét!'), yellow()],
  16: [task('7. Határozza meg -17 abszolút értékét!'), yellow()],
  18: [task('8. Határozza meg az 5 15. hatványát!'), yellow()],
};

// A cell with a black frame around it
const framed = (row: number, col: number) => {
  if ([2, 3, 4, 5, 7, 9].includes(row)) return col >= 3 && col <= 5;
  if ([14, 16].includes(row)) return col === 5;
  if (row === 18) return col <= 3 || col === 5;
  return false;
};

const tinted = (row: number, col: number) => (row === 14 || row === 16) && col <= 3;

const bottomBorder = (row: number, col: number) => {
  if (framed(row, col) || framed(row + 1, col)) return 'border-b-black';
  if (tinted(row, col) || tinted(row + 1, col)) return 'border-b-[#c2d6eb]';
  return 'border-b-[#d2d2d2]';
};

const rightBorder = (row: number, lastCol: number) => {
  if (framed(row, lastCol) || framed(row, lastCol + 1)) return 'border-r-black';
  if (tinted(row, lastCol)) return 'border-r-[#c2d6eb]';
  return 'border-r-[#d2d2d2]';
};

const SheetRow = ({ row }: { row: number }) => {
  const items: React.ReactNode[] = [];
  for (let col = 0; col <= columns.length; ) {
    const cell = cells[row]?.find((c) => c.col === col);
    const span = cell?.span ?? 1;
    items.push(
      <td
        key={col}
        colSpan={span}
        className={clsx('h-7 border-r-2 border-b-2 p-0 pt-1 leading-[22px] whitespace-nowrap', bottomBorder(row, col), rightBorder(row, col + span - 1), cell?.className)}
      >
        {cell?.text}
      </td>
    );
    col += span;
  }
  return (
    <tr>
      <th
        scope="row"
        className={clsx('h-7 border-r-2 border-b-2 border-r-[#c4c4c4] border-b-[#6a6a6a] p-0 pt-1 text-center leading-[22px] font-normal text-white', row === 1 ? 'bg-[#5a5a5a]' : 'bg-[#171717]')}
      >
        {row}
      </th>
      {items}
    </tr>
  );
};

const taskLines = [
  'Feladatok!:',
  '1. Kerekítse a számot a hozzá legközelebb eső egész számra!',
  '2. Kerekítse a számot kettő tizedesjeggyel!',
  '3. Kerekítse a számot tízesekre!',
  '4. Kerekítse fel a számot százasokra!',
  '5. Kerekítse le a számot ezresekre!',
];

const Sheet = () => (
  <main className="relative min-h-0 flex-1 overflow-hidden bg-white">
    <table className="w-full table-fixed border-separate border-spacing-0 font-['Liberation_Serif',serif] text-[23px] text-black">
      <colgroup>
        <col className="w-[46px]" />
        {columns.map((name) => (
          <col key={name} className={['D', 'E', 'F'].includes(name) ? 'w-[188px]' : 'w-[106px]'} />
        ))}
        <col />
      </colgroup>
      <thead>
        <tr className="bg-[#171717] text-white">
          <td className="h-11 border-r-2 border-b-2 border-r-[#c4c4c4] border-b-[#c4c4c4] p-0">
            <svg viewBox="0 0 44 42" className="block h-[42px] w-11" fill="#5c5c5c">
              <path d="M40 8V38H10Z" />
            </svg>
          </td>
          {columns.map((name, i) => (
            <th key={name} scope="col" className={clsx('h-11 border-r-2 border-b-2 border-r-[#555555] border-b-[#b8b8b8] p-0 pt-1 text-center leading-[38px] font-normal', i === 0 && 'bg-[#555555]')}>
              {name}
            </th>
          ))}
          <td className="border-b-2 border-b-[#b8b8b8]" />
        </tr>
      </thead>
      <tbody>
        {Array.from({ length: rowCount }, (_, i) => (
          <SheetRow key={i} row={i + 1} />
        ))}
      </tbody>
    </table>

    {/* Active cell frame */}
    <div className="absolute top-10 left-[42px] h-[34px] w-28 border-4 border-[#3a7349]">
      <span className="absolute -right-1.5 -bottom-1.5 size-3 border-t-2 border-l-2 border-white bg-[#3a7349]" />
    </div>

    {/* Floating text box */}
    <div className="absolute top-16 left-[1017px] flex h-[347px] w-[586px] flex-col gap-[27px] border-2 border-[#6496d2] bg-[#c2d6eb] pt-1 pl-3 font-[Lato] text-[21px] leading-[27px] font-bold text-black">
      {taskLines.map((line) => (
        <p key={line} className="whitespace-nowrap">{line}</p>
      ))}
    </div>

    <div className="absolute right-[142px] bottom-1.5 left-[50px] h-5 rounded-full bg-black/20" />
  </main>
);

const SheetTabs = () => (
  <div className="flex h-[53px] shrink-0 items-start border-t-2 border-b border-t-[#6a6a6a] border-b-black bg-[#313131]">
    <div className="flex h-[50px] w-[121px] shrink-0 items-center gap-8 pl-[30px]">
      <IconButton label="Előző lap">
        <svg viewBox="0 0 14 20" className="h-5 w-3.5" fill="#6a6a6a"><path d="M14 0V20L0 10Z" /></svg>
      </IconButton>
      <IconButton label="Következő lap">
        <svg viewBox="0 0 14 20" className="h-5 w-3.5" fill="#6a6a6a"><path d="M0 0V20L14 10Z" /></svg>
      </IconButton>
    </div>
    <button type="button" className="-mt-0.5 h-[47px] w-[158px] rounded-b-md border-b-2 border-[#6a6a6a] bg-white pt-1.5 text-[22px] font-bold text-[#3f8452]">bead25</button>
    <button type="button" aria-label="Új lap" className="flex h-12 w-[76px] items-center justify-center">
      <svg viewBox="0 0 20 20" className="size-5" stroke="#b0b0b0" strokeWidth="4"><path d="M0 10H20M10 0V20" /></svg>
    </button>
    <div className="h-[41px] w-0.5 bg-[#6a6a6a]" />
  </div>
);

const StatusBar = () => (
  <footer className="flex h-[45px] shrink-0 items-center bg-linear-to-b from-[#494949] to-[#3b3b3b] text-2xl text-white">
    <span className="pl-12">Kész</span>
    <button type="button" className="ml-[38px] flex items-center gap-1">
      <AccessibilityIcon />
      Akadálymentesség: minden rendben
    </button>
    <div className="ml-auto flex h-full items-center">
      <IconButton label="Normál nézet" className="h-full w-[74px] justify-center bg-[#5e5e5e]"><NormalViewIcon /></IconButton>
      <IconButton label="Lapelrendezés nézet" className="ml-[21px]"><PageLayoutIcon /></IconButton>
      <IconButton label="Oldaltörés megtekintése" className="ml-[43px]"><PageBreakIcon /></IconButton>
      <IconButton label="Kicsinyítés" className="ml-[38px]">
        <svg viewBox="0 0 16 16" className="size-4" stroke="white" strokeWidth="4"><path d="M0 8H16" /></svg>
      </IconButton>
      <input
        type="range"
        aria-label="Nagyítás"
        min="0"
        max="200"
        defaultValue="100"
        className="mx-3.5 h-2 w-[200px] appearance-none rounded-full bg-[#7e7e7e] [&::-webkit-slider-thumb]:size-8 [&::-webkit-slider-thumb]:appearance-none [&::-webkit-slider-thumb]:rounded-full [&::-webkit-slider-thumb]:bg-[#a3a3a3]"
      />
      <IconButton label="Nagyítás növelése">
        <svg viewBox="0 0 16 16" className="size-4" stroke="white" strokeWidth="4"><path d="M0 8H16M8 0V16" /></svg>
      </IconButton>
      <span className="w-[146px] pl-[34px]">100%</span>
    </div>
  </footer>
);

const App = () => (
  <div className="flex h-screen flex-col overflow-hidden bg-[#2d2d2d] font-[Inter,sans-serif] text-white">
    <TitleBar />
    <TabBar />
    <Ribbon />
    <FormulaBar />
    <Sheet />
    <SheetTabs />
    <StatusBar />
  </div>
);

export default App;
